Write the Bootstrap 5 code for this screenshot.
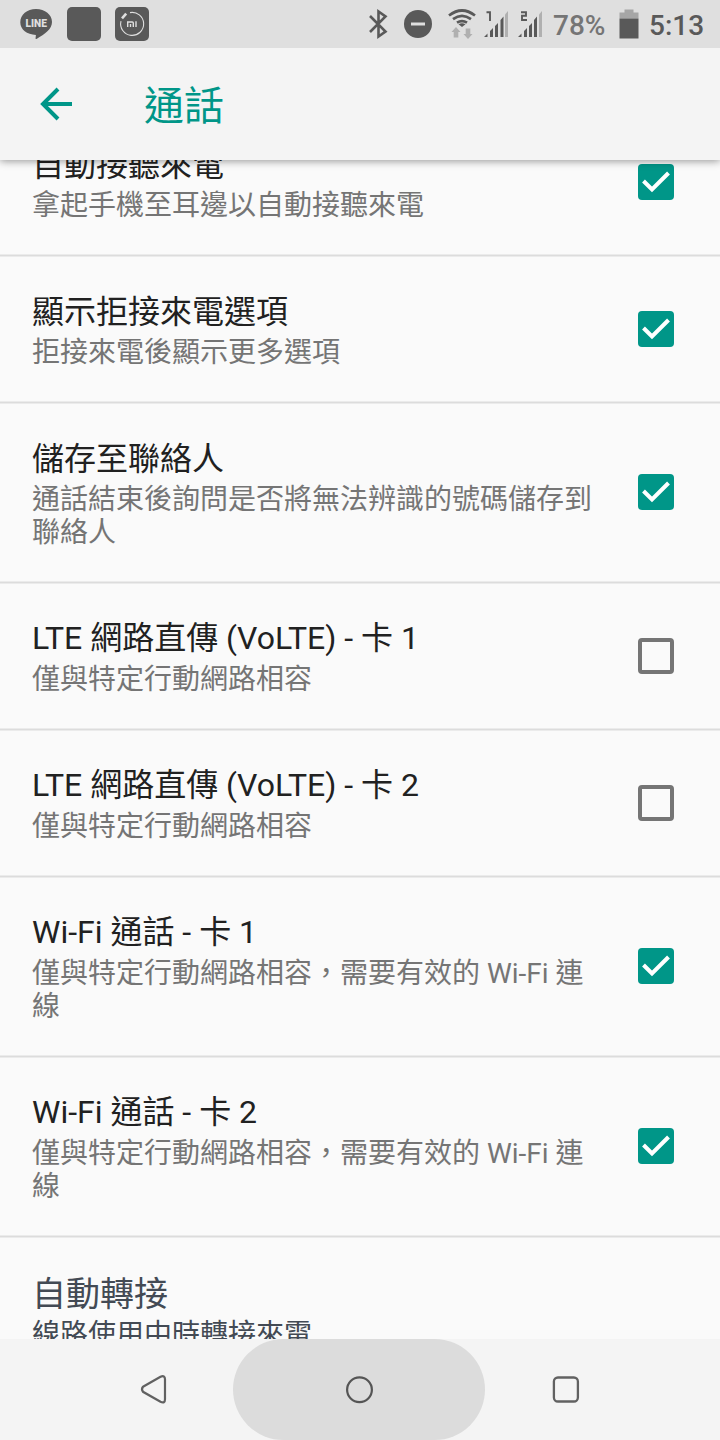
<!DOCTYPE html>
<html lang="zh-Hant">
<head>
<meta charset="utf-8">
<meta name="viewport" content="width=device-width, initial-scale=1">
<title>通話</title>
<link href="https://cdn.jsdelivr.net/npm/bootstrap@5.3.0/dist/css/bootstrap.min.css" rel="stylesheet">
<style>
body{width:720px;height:1440px;background:#fafafa;font-family:Roboto,"Noto Sans CJK TC",sans-serif;color:#212121}
svg{display:block;flex:none}
.status-bar{height:48px;background:#dfdfdf;color:#595959;font-size:28px;line-height:52px;font-weight:500;position:relative;z-index:3}
.status-bar .pct{width:66px;color:#757575}
.status-bar .clock{width:71px}
.app-bar{height:112px;background:#f4f4f4;color:#009688;box-shadow:0 1px 8px rgba(0,0,0,.42);z-index:2}
.app-bar h1{font-size:40px;line-height:56px;font-weight:400;margin-left:72px;padding-top:5px}
.settings{height:1179px}
.settings ul{margin-top:-50px}
.pref{padding:35px 46px 0 32px;height:147px;gap:32px}
.pref.tall{height:180px}
.pref::after{content:"";position:absolute;left:0;right:0;bottom:0;height:3px;background:#dcdcdc;border:solid #ebebeb;border-width:1px 0}
.pref .label{font-size:32px;line-height:40px}
.pref .label.latin{margin-top:-1px;padding-bottom:1px}
.pref .desc{font-size:28px;line-height:33px;margin-top:4px;color:#757575}
.pref.plain .label{font-size:34px;line-height:42px;color:#434a54}
.pref.plain .desc{color:#434a54;margin-top:3px}
.pref .form-check-input{width:36px;height:36px;margin:0;border:4px solid #757575;border-radius:4px;background-color:transparent;flex:none;align-self:center;position:relative;top:-19px}
.pref.tall .form-check-input{top:-19.5px}
.pref .form-check-input:checked{background-color:#009688;border:0;background-size:36px 36px;background-image:url("data:image/svg+xml,%3Csvg xmlns='http://www.w3.org/2000/svg' viewBox='0 0 36 36'%3E%3Cpath d='M5.500 17l8.500 8.500L30.500 9' fill='none' stroke='white' stroke-width='4'/%3E%3C/svg%3E")}
.nav-keys{height:101px;background:#f4f4f4}
.nav-keys .home{width:252px;height:101px;border-radius:51px;background:#dcdcdc}
</style>
</head>
<body class="overflow-hidden d-flex flex-column">
<header class="status-bar d-flex flex-shrink-0">
  <svg width="60" height="48" viewBox="0 0 60 48"><path d="M36 9c9 0 16 5.600 16 13 0 7-7 12-15.500 17-.8.300-1-.2-.9-1l.3-3C27 34.500 20.300 29.500 20.300 22.500 20.300 14.500 27 9 36 9z" fill="#595959"/><text x="25.500" y="26.500" font-size="10.500" font-weight="900" textLength="21.500" lengthAdjust="spacingAndGlyphs" fill="#dfdfdf">LINE</text></svg>
  <svg width="48" height="48" viewBox="60 0 48 48"><rect x="67" y="7" width="34" height="34" rx="5" fill="#595959"/></svg>
  <svg width="48" height="48" viewBox="108 0 48 48"><rect x="115" y="7" width="34" height="34" rx="5" fill="#595959"/><g fill="none" stroke="#dfdfdf"><path d="M130 12.600a11.500 11.500 0 1 1-9 8.500" stroke-width="1.100"/><path d="M122 18.300l4.200-4.600" stroke-width="2.600"/><path d="M127.700 27v-5h4.600q1 0 1 1v4M130.500 24v3M136 21.300v5.700" stroke-width="1.400"/></g></svg>
  <svg class="ms-auto" width="36" height="48" viewBox="360 0 36 48"><path d="M370 16l15.500 15.500-7 5V11.500l7 5L370 32" fill="none" stroke="#595959" stroke-width="2.600"/></svg>
  <svg width="44" height="48" viewBox="396 0 44 48"><circle cx="418" cy="24" r="14" fill="#595959"/><path d="M411 24h14" stroke="#dfdfdf" stroke-width="3"/></svg>
  <svg width="42" height="48" viewBox="440 0 42 48"><g fill="none" stroke="#595959" stroke-width="2.700"><path d="M449 15.500q13-10 26 0M453 19.200q9-6.500 18 0M457 22.700q5-3.300 10 0"/></g><path d="M458.500 24.200q3.500-2 7 0L462 27z" fill="#595959"/><path d="M456 27l4.500 5h-2.200V37.500h-4.600v-5.500h-2.200zM468 39l-4.500-5h2.200V28.500h4.600v5.500h2.200z" fill="#b0b0b0"/></svg>
  <svg width="34" height="48" viewBox="482 0 34 48"><path d="M486.500 12.300h3.500V21" fill="none" stroke="#595959" stroke-width="1.900"/><path d="M484 37l3.500-3.500V37zM490 37v-6l3-3v9zM495 37V26l3-3v14zM500.500 37V20l3-3.500V37z" fill="#595959"/><path d="M505 37V14.500l3-3.500v26z" fill="#b0b0b0"/></svg>
  <svg width="37" height="48" viewBox="516 0 37 48"><path d="M521 12.300h5v3.500h-4v4.200h5" fill="none" stroke="#595959" stroke-width="1.900"/><path d="M518 37l3.500-3.500V37zM524 37v-6l3-3v9zM529 37V26l3-3v14zM534 37V20l3-3.500V37z" fill="#595959"/><path d="M539 37V14.500l3-3.500v26z" fill="#b0b0b0"/></svg>
  <span class="pct">78%</span>
  <svg width="30" height="48" viewBox="619 0 30 48"><path d="M619.500 12.500h5v-3h9v3h5v6h-19z" fill="#a6a6a6"/><path d="M619.500 18.500h19v20h-19z" fill="#595959"/></svg>
  <span class="clock">5:13</span>
</header>
<nav class="app-bar d-flex align-items-center flex-shrink-0 position-relative">
  <svg class="ms-4 ps-3" width="48" height="40" viewBox="0 0 32 40"><path d="M18 5L3 20l15 15M2 20h30" fill="none" stroke="#009688" stroke-width="4"/></svg>
  <h1 class="mb-0">通話</h1>
</nav>
<main class="settings overflow-hidden flex-shrink-0">
  <ul class="list-unstyled mb-0">
    <li class="pref position-relative d-flex align-items-start"><div class="flex-fill"><div class="label">自動接聽來電</div><div class="desc">拿起手機至耳邊以自動接聽來電</div></div><input class="form-check-input" type="checkbox" checked></li>
    <li class="pref position-relative d-flex align-items-start"><div class="flex-fill"><div class="label">顯示拒接來電選項</div><div class="desc">拒接來電後顯示更多選項</div></div><input class="form-check-input" type="checkbox" checked></li>
    <li class="pref tall position-relative d-flex align-items-start"><div class="flex-fill"><div class="label">儲存至聯絡人</div><div class="desc">通話結束後詢問是否將無法辨識的號碼儲存到聯絡人</div></div><input class="form-check-input" type="checkbox" checked></li>
    <li class="pref position-relative d-flex align-items-start"><div class="flex-fill"><div class="label latin">LTE 網路直傳 (VoLTE) - 卡 1</div><div class="desc">僅與特定行動網路相容</div></div><input class="form-check-input" type="checkbox"></li>
    <li class="pref position-relative d-flex align-items-start"><div class="flex-fill"><div class="label latin">LTE 網路直傳 (VoLTE) - 卡 2</div><div class="desc">僅與特定行動網路相容</div></div><input class="form-check-input" type="checkbox"></li>
    <li class="pref tall position-relative d-flex align-items-start"><div class="flex-fill"><div class="label latin">Wi-Fi 通話 - 卡 1</div><div class="desc">僅與特定行動網路相容，需要有效的 Wi-Fi 連線</div></div><input class="form-check-input" type="checkbox" checked></li>
    <li class="pref tall position-relative d-flex align-items-start"><div class="flex-fill"><div class="label latin">Wi-Fi 通話 - 卡 2</div><div class="desc">僅與特定行動網路相容，需要有效的 Wi-Fi 連線</div></div><input class="form-check-input" type="checkbox" checked></li>
    <li class="pref plain position-relative"><div class="label">自動轉接</div><div class="desc">線路使用中時轉接來電</div></li>
  </ul>
</main>
<footer class="nav-keys d-flex align-items-center flex-shrink-0 position-relative">
  <svg width="233.400" height="101" viewBox="0 0 233.400 101"><path d="M143 47.800l17.500-10q4.500-2 4.500 2.500v20q0 4.500-4.500 2.500l-17.500-10q-2-2.500 0-5z" fill="none" stroke="#616161" stroke-width="2.200"/></svg>
  <div class="home d-flex align-items-center justify-content-center"><svg width="30" height="30" viewBox="0 0 30 30"><circle cx="15.500" cy="14.800" r="12.400" fill="none" stroke="#555" stroke-width="2.200"/></svg></div>
  <svg width="234" height="101" viewBox="485.400 0 234 101"><rect x="554.300" y="38.500" width="24" height="24" rx="4" fill="none" stroke="#616161" stroke-width="2.300"/></svg>
</footer>
<script src="https://cdn.jsdelivr.net/npm/bootstrap@5.3.0/dist/js/bootstrap.bundle.min.js"></script>
</body>
</html>
